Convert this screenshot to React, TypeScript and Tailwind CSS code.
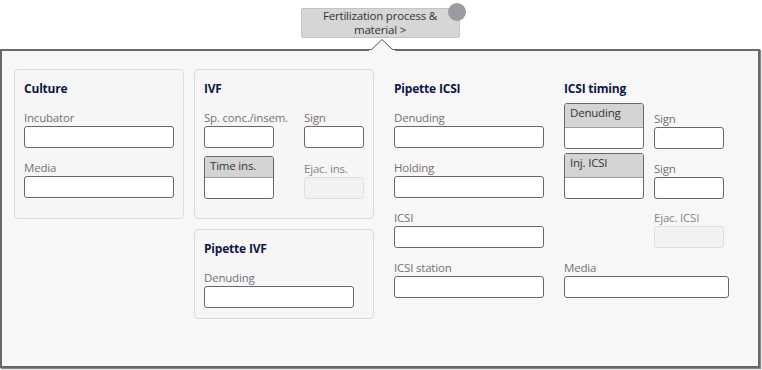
import React from "react"

const font = { fontFamily: '"Open Sans", "Noto Sans", sans-serif' }

function Label({ children, dim }: { children: React.ReactNode; dim?: boolean }) {
    return <div className={"h-4 text-[11.5px] leading-4 whitespace-nowrap tracking-[-0.2px] " + (dim ? "text-[#8a8089]" : "text-[#7a6e78]")}>{children}</div>
}

function Input({ w, disabled }: { w: string; disabled?: boolean }) {
    return disabled ? (
        <div className={"h-[22px] rounded-[3px] border border-[#dedede] bg-[#f2f2f2] " + w} />
    ) : (
        <div className={"h-[22px] rounded-[3px] border border-[#676767] bg-white " + w} />
    )
}

function Field({ label, w, disabled }: { label: string; w: string; disabled?: boolean }) {
    return (
        <div className={"flex flex-col " + w}>
            <Label dim={disabled}>{label}</Label>
            <Input w={w} disabled={disabled} />
        </div>
    )
}

function TimeBox({ label, w, head }: { label: string; w: string; head: string }) {
    return (
        <div className={"flex flex-col overflow-hidden rounded-[3px] border border-[#676767] bg-white " + w}>
            <div className={"border-b border-[#9c9c9c] bg-[#d4d4d4] pl-[5px] text-[11.5px] leading-[18px] tracking-[-0.2px] text-[#333] " + head}>{label}</div>
            <div className="h-[20px]" />
        </div>
    )
}

function Title({ children }: { children: React.ReactNode }) {
    return <div className="h-5 text-[12px] font-bold leading-5 tracking-[-0.2px] text-[#0b1746]">{children}</div>
}

export default function App() {
    return (
        <div className="relative h-[370px] w-[762px] overflow-hidden bg-white" style={font}>
            {/* header button */}
            <div className="flex h-[49px] justify-center pt-[8px]">
                <div className="relative ml-[-2px] flex h-[30px] w-[159px] flex-col items-center justify-center rounded-[2px] border border-[#c4c4c4] bg-[#d6d6d6] text-[11.5px] leading-[14px] tracking-[-0.2px] text-[#333]">
                    <span>Fertilization process &amp;</span>
                    <span>material &gt;</span>
                    <span className="absolute right-[-7px] top-[-6px] h-[18px] w-[18px] rounded-full bg-[#9b99a1]" />
                </div>
            </div>

            {/* panel */}
            <div className="relative flex h-[319px] w-[760px] gap-[10px] border-2 border-[#686868] bg-[#f7f7f7] pl-[12px] pt-[18px] shadow-[1px_1px_1px_#888]">
                <svg className="absolute left-[367px] top-[-13px]" width="26" height="14" viewBox="0 0 26 14">
                    <polygon points="1,13 13,1.5 25,13" fill="#f7f7f7" stroke="#555" strokeWidth="1" />
                    <rect x="0" y="12" width="26" height="3" fill="#f7f7f7" />
                </svg>

                {/* Culture */}
                <div className="h-[150px] w-[170px] rounded-[4px] border border-[#dcdcdc] bg-[#f6f6f6] px-[9px] pt-[9px]">
                    <Title>Culture</Title>
                    <div className="mt-[11px] flex flex-col gap-[12px]">
                        <Field label="Incubator" w="w-[150px]" />
                        <Field label="Media" w="w-[150px]" />
                    </div>
                </div>

                {/* IVF column */}
                <div className="flex flex-col gap-[10px]">
                    <div className="h-[150px] w-[180px] rounded-[4px] border border-[#dcdcdc] bg-[#f6f6f6] px-[9px] pt-[9px]">
                        <Title>IVF</Title>
                        <div className="mt-[11px] flex gap-[30px]">
                            <Field label="Sp. conc./insem." w="w-[70px]" />
                            <Field label="Sign" w="w-[60px]" />
                        </div>
                        <div className="mt-[8px] flex items-end gap-[30px]">
                            <TimeBox label="Time ins." w="w-[70px]" head="h-[21px]" />
                            <Field label="Ejac. ins." w="w-[60px]" disabled />
                        </div>
                    </div>
                    <div className="h-[90px] w-[180px] rounded-[4px] border border-[#dcdcdc] bg-[#f6f6f6] px-[9px] pt-[9px]">
                        <Title>Pipette IVF</Title>
                        <div className="mt-[11px]">
                            <Field label="Denuding" w="w-[150px]" />
                        </div>
                    </div>
                </div>

                {/* Pipette ICSI */}
                <div className="w-[170px] px-[10px] pt-[10px]">
                    <Title>Pipette ICSI</Title>
                    <div className="mt-[11px] flex flex-col gap-[12px]">
                        <Field label="Denuding" w="w-[150px]" />
                        <Field label="Holding" w="w-[150px]" />
                        <Field label="ICSI" w="w-[150px]" />
                        <Field label="ICSI station" w="w-[150px]" />
                    </div>
                </div>

                {/* ICSI timing */}
                <div className="pt-[10px]">
                    <Title>ICSI timing</Title>
                    <div className="mt-[4px] flex items-end gap-[10px]">
                        <TimeBox label="Denuding" w="w-[80px]" head="h-[24px]" />
                        <Field label="Sign" w="w-[70px]" />
                    </div>
                    <div className="mt-[4px] flex items-end gap-[10px]">
                        <TimeBox label="Inj. ICSI" w="w-[80px]" head="h-[24px]" />
                        <Field label="Sign" w="w-[70px]" />
                    </div>
                    <div className="mt-[11px] pl-[90px]">
                        <Field label="Ejac. ICSI" w="w-[70px]" disabled />
                    </div>
                    <div className="mt-[12px]">
                        <Field label="Media" w="w-[165px]" />
                    </div>
                </div>
            </div>
        </div>
    )
}
